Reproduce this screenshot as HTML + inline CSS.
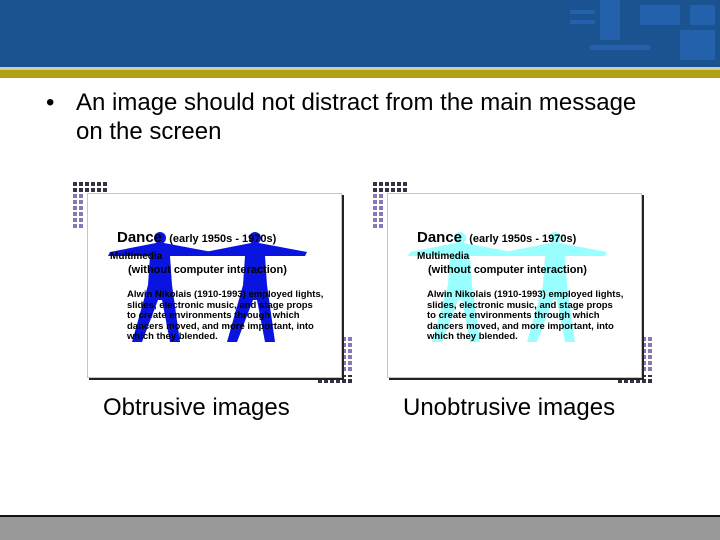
<!DOCTYPE html>
<html><head><style>
body{margin:0;width:720px;height:540px;position:relative;background:#fff;font-family:"Liberation Sans",sans-serif;overflow:hidden}
.hdr{position:absolute;left:0;top:0;width:720px;height:67px;background:#1b5391}
.l1{position:absolute;left:0;top:67px;width:720px;height:3px;background:#cfcfb0}
.l2{position:absolute;left:0;top:70px;width:720px;height:8px;background:#b0a313}
.ft{position:absolute;left:0;top:515px;width:720px;height:2px;background:#111}
.fg{position:absolute;left:0;top:517px;width:720px;height:23px;background:#999}
.bul{position:absolute;left:76px;top:88px;font-size:24px;line-height:29px;color:#000;white-space:nowrap}
.dot{position:absolute;left:46px;top:88px;font-size:24px;line-height:29px}
.slide{position:absolute;top:193px;width:253px;height:183px;border:1px solid #d8b8e0;box-shadow:2px 2px 0 #222;background:#fff}
.cap{position:absolute;top:394px;font-size:24px}
.t{position:absolute;font-weight:bold;color:#000;white-space:nowrap}
</style></head><body>
<div class="hdr"></div>
<svg style="position:absolute;left:530px;top:0" width="190" height="67">
<g fill="#2b6bc0" opacity=".6"><rect x="70" y="0" width="20" height="40"/><rect x="110" y="5" width="40" height="20"/><rect x="160" y="5" width="25" height="20"/><rect x="60" y="45" width="60" height="5"/><rect x="150" y="30" width="35" height="30"/><rect x="40" y="10" width="25" height="4"/><rect x="40" y="20" width="25" height="4"/></g></svg>
<div class="l1"></div><div class="l2"></div>
<div class="dot">•</div>
<div class="bul">An image should not distract from the main message<br>on the screen</div>

<svg width="0" height="0" style="position:absolute"><defs>
<pattern id="dk" width="6" height="6" patternUnits="userSpaceOnUse"><rect width="4" height="4" fill="#334"/></pattern>
<pattern id="lt" width="6" height="6" patternUnits="userSpaceOnUse"><rect width="4" height="4" fill="#8878b8"/></pattern>
<g id="fig"><circle cx="0" cy="8" r="6"/><path d="M-4 13 L-50 22 L-52 26 L-10 26 L-12 55 L-28 112 L-18 112 L-2 70 L2 70 L10 112 L20 112 L12 55 L10 26 L50 26 L52 22 L4 13 Z"/></g>
</defs></svg>
<svg style="position:absolute;left:73px;top:182px" width="40" height="50"><rect x="0" y="0" width="36" height="10" fill="url(#dk)"/><rect x="0" y="12" width="10" height="36" fill="url(#lt)"/></svg>
<svg style="position:absolute;left:318px;top:337px" width="40" height="50"><rect x="24" y="0" width="10" height="36" fill="url(#lt)"/><rect x="0" y="38" width="36" height="10" fill="url(#dk)"/></svg>
<svg style="position:absolute;left:373px;top:182px" width="40" height="50"><rect x="0" y="0" width="36" height="10" fill="url(#dk)"/><rect x="0" y="12" width="10" height="36" fill="url(#lt)"/></svg>
<svg style="position:absolute;left:618px;top:337px" width="40" height="50"><rect x="24" y="0" width="10" height="36" fill="url(#lt)"/><rect x="0" y="38" width="36" height="10" fill="url(#dk)"/></svg>

<div class="slide" style="left:87px"></div>
<div class="slide" style="left:387px"></div>

<svg style="position:absolute;left:100px;top:230px" width="220" height="120"><g fill="#0a14e0">
<use href="#fig" x="60" y="0"/><use href="#fig" x="155" y="0"/></g></svg>
<svg style="position:absolute;left:400px;top:230px" width="220" height="120"><g fill="#9ff">
<use href="#fig" x="60" y="0"/><use href="#fig" x="155" y="0"/></g></svg>

<div class="t" style="left:117px;top:229px;font-size:15px">Dance <span style="font-size:11px">&nbsp;(early 1950s - 1970s)</span></div>
<div class="t" style="left:110px;top:251px;font-size:10px">Multimedia</div>
<div class="t" style="left:128px;top:264px;font-size:11px">(without computer interaction)</div>
<div class="t" style="left:127px;top:290px;font-size:9.5px;line-height:10.5px">Alwin Nikolais (1910-1993) employed lights,<br>slides, electronic music, and stage props<br>to create environments through which<br>dancers moved, and more important, into<br>which they blended.</div>

<div class="t" style="left:417px;top:229px;font-size:15px">Dance <span style="font-size:11px">&nbsp;(early 1950s - 1970s)</span></div>
<div class="t" style="left:417px;top:251px;font-size:10px">Multimedia</div>
<div class="t" style="left:428px;top:264px;font-size:11px">(without computer interaction)</div>
<div class="t" style="left:427px;top:290px;font-size:9.5px;line-height:10.5px">Alwin Nikolais (1910-1993) employed lights,<br>slides, electronic music, and stage props<br>to create environments through which<br>dancers moved, and more important, into<br>which they blended.</div>

<div class="cap" style="left:103px">Obtrusive images</div>
<div class="cap" style="left:403px">Unobtrusive images</div>
<div class="ft"></div><div class="fg"></div>
</body></html>
